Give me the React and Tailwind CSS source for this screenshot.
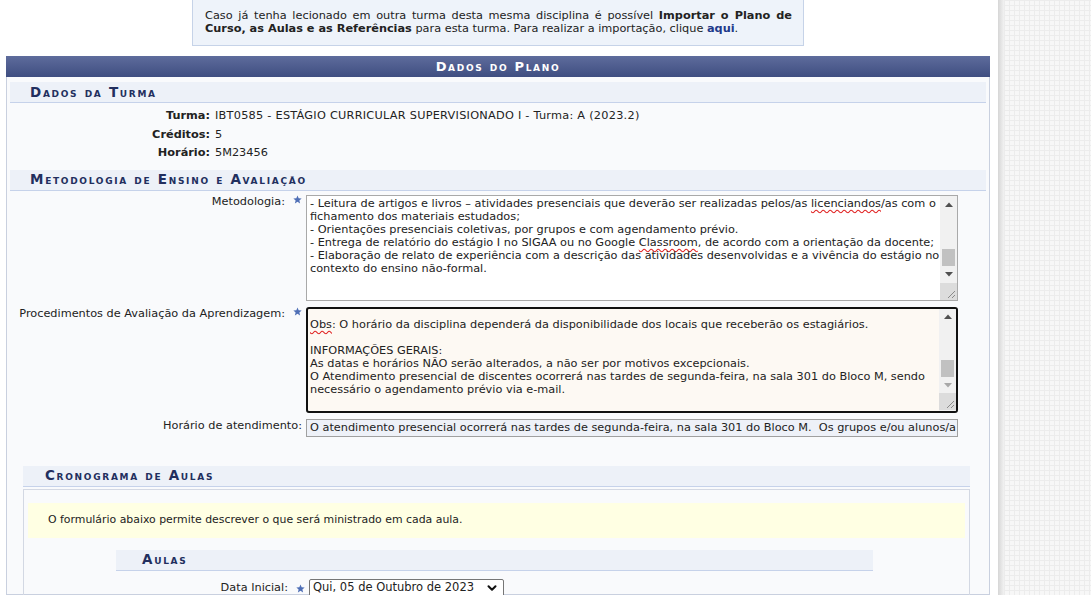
import { ChevronDown } from 'lucide-react'

// Small blue "required" star used next to form labels
function Star() {
  return (
    <svg width="9" height="9" viewBox="0 0 10 10" className="inline-block">
      <polygon
        points="5,0.5 6.3,3.6 9.6,3.8 7.1,6 7.9,9.4 5,7.6 2.1,9.4 2.9,6 0.4,3.8 3.7,3.6"
        fill="#4f6fb6"
      />
    </svg>
  )
}

function Arrow({ up, color }) {
  return (
    <svg width="8" height="5" viewBox="0 0 8 5">
      <polygon points={up ? '0,5 4,0.5 8,5' : '0,0 4,4.5 8,0'} fill={color} />
    </svg>
  )
}

function Grip() {
  return (
    <svg width="17" height="17" viewBox="0 0 17 17">
      <line x1="15" y1="8" x2="8" y2="15" stroke="#8a8a8a" strokeWidth="1" />
      <line x1="15" y1="12" x2="12" y2="15" stroke="#8a8a8a" strokeWidth="1" />
    </svg>
  )
}

// Fake textarea with a drawn scrollbar, so the picture does not depend on native widgets
function Area({ children, box, textPad, spacer, downColor }) {
  return (
    <div className={`flex h-[106px] w-[652px] overflow-hidden ${box}`}>
      <div className={`flex-1 overflow-hidden whitespace-nowrap leading-[13px] ${textPad}`}>{children}</div>
      <div className="flex w-[17px] shrink-0 flex-col bg-[#f1f1f1]">
        <div className="flex h-[17px] items-center justify-center">
          <Arrow up color="#505050" />
        </div>
        <div className={spacer} />
        <div className="mx-[2px] h-[17px] bg-[#c1c1c1]" />
        <div className="flex h-[17px] items-center justify-center">
          <Arrow color={downColor} />
        </div>
        <div className="h-[17px] bg-[#dcdcdc]">
          <Grip />
        </div>
      </div>
    </div>
  )
}

function Band({ children, className = '' }) {
  return (
    <div
      className={`flex h-[21px] items-center border-b border-[#c6d2ea] bg-[#edf1f8] text-[13.5px] font-bold tracking-[1.7px] text-[#222f5e] [font-variant:small-caps] ${className}`}
    >
      {children}
    </div>
  )
}

const wavy = 'underline decoration-wavy decoration-[#e02020] underline-offset-[2px]'

export default function App() {
  return (
    <div className="flex h-[595px] w-full overflow-hidden bg-white font-['DejaVu_Sans',Verdana,sans-serif] text-[11.3px] text-[#222]">
      <div className="w-[998px] shrink-0 pl-[6px] pr-[8px]">
        {/* Import notice */}
        <div className="mx-auto h-[46px] w-[612px] border border-t-0 border-[#c6d3e8] bg-[#eef3fa] pl-[12px] pr-[11px] pt-[9px] leading-[13px]">
          <div className="text-justify [text-align-last:justify]">
            Caso já tenha lecionado em outra turma desta mesma disciplina é possível <b>Importar o Plano de</b>
          </div>
          <div>
            <b>Curso, as Aulas e as Referências</b> para esta turma. Para realizar a importação, clique{' '}
            <b className="text-[#1f3a8a]">aqui</b>.
          </div>
        </div>

        {/* Dados do plano */}
        <div className="mt-[10px]">
          <div className="flex h-[21px] items-center justify-center bg-gradient-to-b from-[#5e6c9c] to-[#3f4e81] text-[13px] font-bold tracking-[1.7px] text-white [font-variant:small-caps]">
            Dados do Plano
          </div>
          <div className="h-[518px] border-x border-b border-[#c9d0df] bg-[#f9fafc] px-[3px] pt-[5px]">
            <Band className="pl-[20px]">Dados da Turma</Band>
            <div className="mb-[7px] mt-[4px] grid grid-cols-[200px_1fr] gap-x-[5px] leading-[18.5px]">
              <div className="text-right font-bold">Turma:</div>
              <div className="tracking-[0.25px]">IBT0585 - ESTÁGIO CURRICULAR SUPERVISIONADO I - Turma: A (2023.2)</div>
              <div className="text-right font-bold">Créditos:</div>
              <div>5</div>
              <div className="text-right font-bold">Horário:</div>
              <div>5M23456</div>
            </div>

            <Band className="pl-[20px]">Metodologia de Ensino e Avaliação</Band>
            <div className="mt-[4px] grid grid-cols-[292px_1fr] gap-x-[4px] gap-y-[6px] leading-[13px]">
              <div className="flex items-start justify-end gap-[8px]">
                <span>Metodologia:</span>
                <Star />
              </div>
              <Area box="border border-[#a9a9a9] bg-white" textPad="pl-[3px] pt-[1px]" spacer="h-[36px]" downColor="#505050">
                <div>
                  - Leitura de artigos e livros – atividades presenciais que deverão ser realizadas pelos/as{' '}
                  <span className={wavy}>licenciandos</span>/as com o
                </div>
                <div>fichamento dos materiais estudados;</div>
                <div>- Orientações presenciais coletivas, por grupos e com agendamento prévio.</div>
                <div>
                  - Entrega de relatório do estágio I no SIGAA ou no Google <span className={wavy}>Classroom</span>, de acordo com a
                  orientação da docente;
                </div>
                <div>- Elaboração de relato de experiência com a descrição das atividades desenvolvidas e a vivência do estágio no</div>
                <div>contexto do ensino não-formal.</div>
              </Area>

              <div className="flex items-start justify-end gap-[8px]">
                <span>Procedimentos de Avaliação da Aprendizagem:</span>
                <Star />
              </div>
              <Area box="rounded-[3px] border-2 border-[#111] bg-[#fdf9f3]" textPad="pl-[2px] pt-[9px]" spacer="h-[35px]" downColor="#a8a8a8">
                <div>
                  <span className={wavy}>Obs</span>: O horário da disciplina dependerá da disponibilidade dos locais que receberão os estagiários.
                </div>
                <div>&nbsp;</div>
                <div>INFORMAÇÕES GERAIS:</div>
                <div>As datas e horários NÃO serão alterados, a não ser por motivos excepcionais.</div>
                <div>O Atendimento presencial de discentes ocorrerá nas tardes de segunda-feira, na sala 301 do Bloco M, sendo</div>
                <div>necessário o agendamento prévio via e-mail.</div>
              </Area>

              <div className="text-right">Horário de atendimento:</div>
              <div className="h-[18px] w-[652px] overflow-hidden whitespace-pre border border-[#a0a0a0] bg-[#eef1f8] pl-[3px] leading-[16px]">
                O atendimento presencial ocorrerá nas tardes de segunda-feira, na sala 301 do Bloco M.  Os grupos e/ou alunos/a
              </div>
            </div>

            {/* Cronograma */}
            <div className="ml-[13px] mr-[16px] mt-[29px]">
              <Band className="pl-[22px]">Cronograma de Aulas</Band>
              <div className="mt-[2px] h-[120px] border border-[#d3d8e3] px-[4px] pt-[13px]">
                <div className="flex h-[35px] items-center bg-[#ffffe3] pl-[20px] text-[10.9px]">
                  O formulário abaixo permite descrever o que será ministrado em cada aula.
                </div>
                <Band className="ml-[88px] mt-[12px] w-[757px] pl-[26px]">Aulas</Band>
                <div className="mt-[8px] flex items-center">
                  <div className="flex w-[277px] items-center justify-end gap-[8px]">
                    <span>Data Inicial:</span>
                    <Star />
                  </div>
                  <div className="ml-[4px] flex h-[19px] w-[195px] items-center justify-between rounded-[2px] border border-[#767676] bg-white pl-[3px] pr-[4px] text-[11.5px]">
                    <span>Qui, 05 de Outubro de 2023</span>
                    <ChevronDown size={14} strokeWidth={3.5} color="#111" />
                  </div>
                </div>
              </div>
            </div>
          </div>
        </div>
      </div>

      <div className="w-[6px] shrink-0 bg-gradient-to-r from-[#d6d6d6] to-[#f2f2f2]" />
      <div className="flex-1 bg-[#f7f7f7] bg-[linear-gradient(90deg,#ececec_1px,transparent_1px),linear-gradient(#ececec_1px,transparent_1px)] bg-[size:5px_5px]" />
    </div>
  )
}
